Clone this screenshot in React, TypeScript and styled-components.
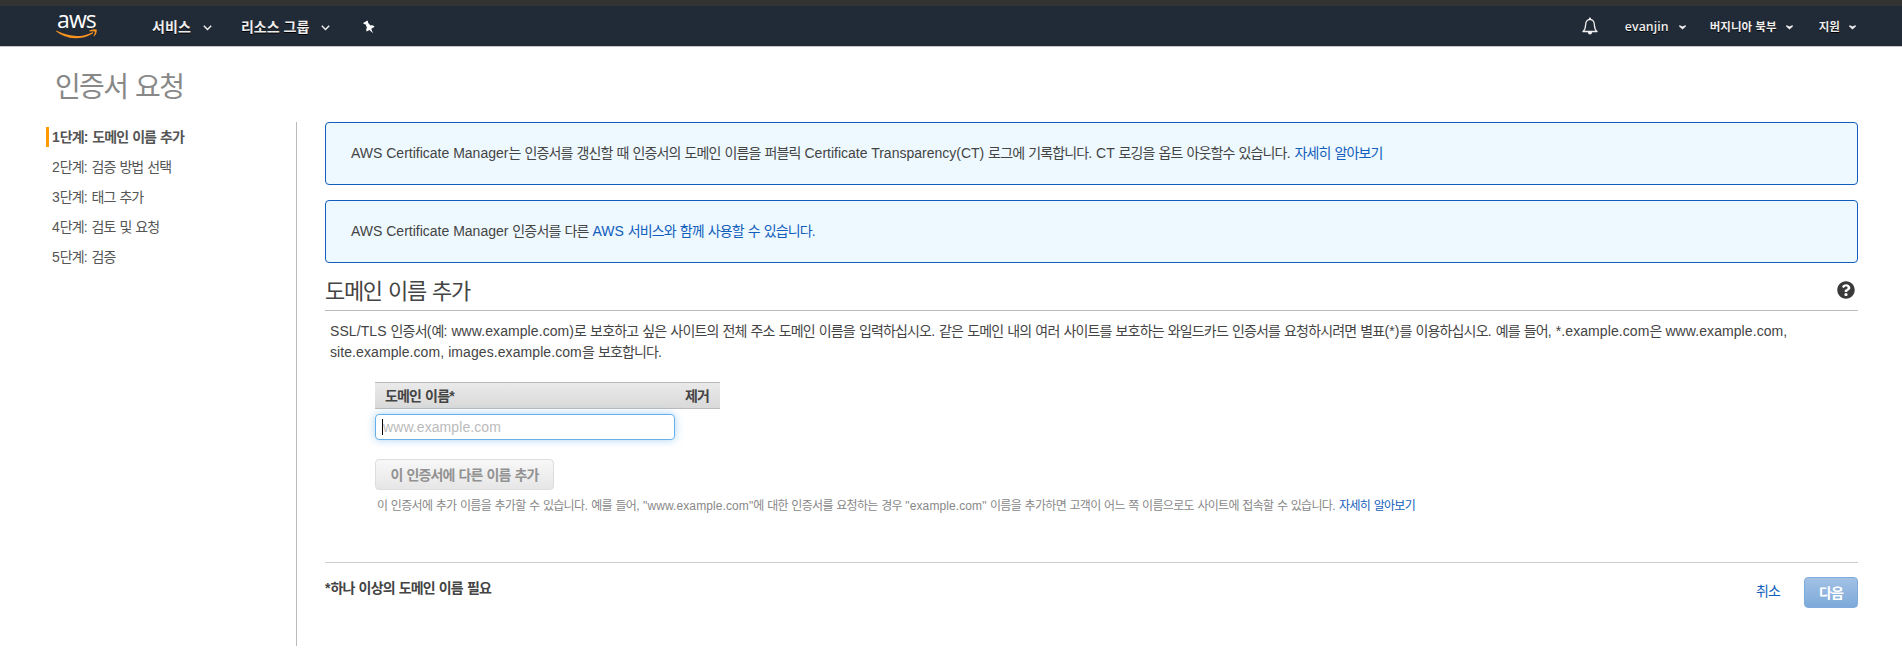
import React from "react";
import styled, { createGlobalStyle } from "styled-components";
import { FaQuestionCircle } from "react-icons/fa";

const GlobalStyle = createGlobalStyle`
  * { box-sizing: border-box; }
  body {
    margin: 0;
    background: #fff;
    color: #444;
    font-family: "Liberation Sans", "Noto Sans CJK KR", sans-serif;
    font-size: 14px;
    letter-spacing: 0.08px;
  }
`;

const Hangul = styled.span`
  letter-spacing: var(--hangul-spacing, -0.06em);
`;

/* Tightens the Korean runs of a mixed Korean and Latin text. */
const Mixed = ({ children }: { children: string }) => (
  <>
    {children.split(/([\uAC00-\uD7A3]+)/).map((run, i) =>
      i % 2 ? <Hangul key={i}>{run}</Hangul> : run
    )}
  </>
);

const Page = styled.div`
  width: 100%;
  height: 666px;
  overflow: hidden;
`;

const NavBar = styled.header`
  display: flex;
  align-items: center;
  height: 47px;
  padding: 0 46px 0 56px;
  border-top: 6px solid #333;
  border-bottom: 1px solid #c4c6c8;
  background: #212b37;
  color: #eee;
  font-family: "Open Sans", "Noto Sans CJK KR", sans-serif;
`;

const NavItem = styled.div<{ $size: number; $gap: number; $before: number; $weight?: number }>`
  display: flex;
  align-items: center;
  gap: ${(p) => p.$gap}px;
  margin-left: ${(p) => p.$before}px;
  padding-top: 2px;
  font-size: ${(p) => p.$size}px;
  font-weight: ${(p) => p.$weight ?? 700};
  line-height: 20px;
  white-space: nowrap;
  text-shadow: 0 1px 0 #000;
`;

const Spacer = styled.div`
  flex: 1;
`;

const PageTitle = styled.h1`
  margin: 0;
  padding: 21px 0 0 55px;
  height: 75px;
  color: #888;
  font-size: 28px;
  font-weight: 400;
  line-height: 40px;
`;

const Body = styled.div`
  display: flex;
  height: 524px;
`;

const Sidebar = styled.nav`
  flex: none;
  display: flex;
  flex-direction: column;
  gap: 10px;
  width: 297px;
  padding: 5px 0 0 46px;
  border-right: 1px solid #bbb;
`;

const Step = styled.div<{ $active?: boolean }>`
  height: 20px;
  padding-left: 3px;
  border-left: 3px solid ${(p) => (p.$active ? "#ff9900" : "transparent")};
  color: #555;
  font-weight: ${(p) => (p.$active ? 700 : 400)};
  line-height: 20px;
  letter-spacing: 0;
  --hangul-spacing: -0.065em;
`;

const Content = styled.main`
  flex: 1;
  margin: 0 44px 0 28px;
`;

const Notice = styled.div`
  height: 63px;
  margin-bottom: 15px;
  padding: 0 25px;
  border: 1px solid #125ebc;
  border-radius: 4px;
  background: #edf8ff;
  line-height: 60px;
  letter-spacing: 0;
`;

const Link = styled.a`
  color: #125ebc;
`;

const SectionHead = styled.div`
  display: flex;
  align-items: center;
  justify-content: space-between;
  height: 33px;
  padding: 0 3px 8px 0;
  border-bottom: 1px solid #bbb;
  margin-bottom: 10px;
  h2 {
    margin: 4px 0 0;
    font-size: 22px;
    font-weight: 400;
    line-height: 28px;
  }
`;

const Description = styled.p`
  margin: 0 60px 19px 5px;
  line-height: 21px;
`;

const Form = styled.div`
  margin-left: 50px;
`;

const TableHead = styled.div`
  display: flex;
  justify-content: space-between;
  width: 345px;
  height: 27px;
  padding: 0 11px 0 10px;
  border: solid #bbb;
  border-width: 1px 0;
  background: linear-gradient(#eaeaea, #d9d9d9);
  font-weight: 700;
  line-height: 26px;
`;

const Field = styled.div`
  display: flex;
  align-items: center;
  width: 300px;
  height: 26px;
  margin: 5px 0 19px;
  padding-left: 6px;
  border: 1px solid #66afe9;
  border-radius: 4px;
  box-shadow: 0 0 8px rgba(102, 175, 233, 0.55);
  color: #bbb;
`;

const Caret = styled.span`
  width: 1px;
  height: 16px;
  margin-top: -1px;
  background: #000;
`;

const Button = styled.button<{ $primary?: boolean }>`
  height: 31px;
  padding: 1px 0 0;
  width: ${(p) => (p.$primary ? 54 : 179)}px;
  border: 1px solid ${(p) => (p.$primary ? "#7facda" : "#ddd")};
  border-radius: 4px;
  background: ${(p) =>
    p.$primary ? "linear-gradient(#a3c1e5, #7daada)" : "linear-gradient(#f8f8f8, #e6e6e6)"};
  color: ${(p) => (p.$primary ? "#fff" : "#929292")};
  font: inherit;
  font-weight: 700;
  line-height: 28px;
`;

const Hint = styled.p`
  margin: 6px 0 0 2px;
  color: #888;
  font-size: 12px;
  line-height: 20px;
  letter-spacing: 0.1px;
  --hangul-spacing: -0.0555em;
`;

const Footer = styled.footer`
  display: flex;
  align-items: flex-start;
  margin-top: 46px;
  padding-top: 14px;
  border-top: 1px solid #ccc;
`;

const Required = styled.strong`
  flex: 1;
  line-height: 22px;
`;

const Cancel = styled(Link)`
  margin-right: 24px;
  line-height: 28px;
`;

const LogoMark = styled.div`
  display: flex;
  flex-direction: column;
  width: 42px;
  height: 40px;
  color: #fff;
  font-size: 23px;
  font-weight: 500;
  line-height: 24px;
  letter-spacing: -0.9px;
  padding: 1px 0 0 1px;
  svg {
    margin: -2px 0 0 -1px;
    flex: none;
  }
`;

const Logo = () => (
  <LogoMark>
    aws
    <svg width="42" height="10" viewBox="0 0 42 10">
      <path d="M0.3 1.6 Q20 11.5 36 3.4 Q38 2.9 36.8 4.4 Q28 9.5 19 9.3 Q8 8.8 0 2.2Z" fill="#f7931e" />
      <path d="M33 1.8 Q37 -0.6 40.6 0.6 Q41.5 3.9 38.2 7.3 Q37.3 7.6 37.7 6.6 Q39.4 3.2 38.6 2.5 Q37 1.9 33.8 2.5Z" fill="#f7931e" />
    </svg>
  </LogoMark>
);

const ChevronIcon = styled.svg`
  margin-top: 2px;
`;

const Chevron = () => (
  <ChevronIcon width="9" height="6" viewBox="0 0 9 6">
    <path d="M0.8 0.8 L4.5 4.5 L8.2 0.8" fill="none" stroke="#eee" strokeWidth="1.5" />
  </ChevronIcon>
);

const SmallArrow = () => (
  <svg width="7" height="5" viewBox="0 0 7 5">
    <path d="M0 0.6 H1.4 L3.5 1.6 L5.6 0.6 H7 V1.2 L3.5 4.6 L0 1.2Z" fill="#eee" />
  </svg>
);

const Pin = () => (
  <svg width="14" height="14" viewBox="0 0 14 14">
    <path d="M1.2 3 L5.4 0.6 L6.2 1.9 L5.8 2.6 L8.5 5.4 Q11 4.8 12.6 6.7 L9.2 8.8 L11 13.2 L7.5 9.9 L4.6 11.6 Q3.6 9.4 4.9 7.6 L3.3 4 L2 4.2Z" fill="#fff" />
  </svg>
);

const Bell = () => (
  <svg width="16" height="18" viewBox="0 0 16 18">
    <path d="M1 14.5 Q3.4 12.5 3.6 8 Q3.9 2.6 8 2.4 Q12.1 2.6 12.4 8 Q12.6 12.5 15 14.5Z" fill="none" stroke="#eee" strokeWidth="1.3" strokeLinejoin="round" />
    <circle cx="8" cy="1.7" r="1.1" fill="#eee" />
    <path d="M5.7 15 H10.3 Q9.8 17.5 8 17.5 Q6.2 17.5 5.7 15Z" fill="#eee" />
  </svg>
);

const steps = [
  "1단계: 도메인 이름 추가",
  "2단계: 검증 방법 선택",
  "3단계: 태그 추가",
  "4단계: 검토 및 요청",
  "5단계: 검증",
];

export default function App() {
  return (
    <Page>
      <GlobalStyle />
      <NavBar>
        <Logo />
        <NavItem $size={14} $gap={12} $before={54}>
          서비스
          <Chevron />
        </NavItem>
        <NavItem $size={14} $gap={12} $before={29}>
          리소스 그룹
          <Chevron />
        </NavItem>
        <NavItem $size={14} $gap={0} $before={32}>
          <Pin />
        </NavItem>
        <Spacer />
        <Bell />
        <NavItem $size={12.3} $gap={10} $before={27} $weight={600}>
          evanjin
          <SmallArrow />
        </NavItem>
        <NavItem $size={11.5} $gap={9} $before={24} $weight={600}>
          버지니아 북부
          <SmallArrow />
        </NavItem>
        <NavItem $size={11.5} $gap={9} $before={26} $weight={600}>
          지원
          <SmallArrow />
        </NavItem>
      </NavBar>
      <PageTitle>
        <Mixed>인증서 요청</Mixed>
      </PageTitle>
      <Body>
        <Sidebar>
          {steps.map((s, i) => (
            <Step key={s} $active={i === 0}>
              <Mixed>{s}</Mixed>
            </Step>
          ))}
        </Sidebar>
        <Content>
          <Notice>
            <Mixed>
              {"AWS Certificate Manager는 인증서를 갱신할 때 인증서의 도메인 이름을 퍼블릭 Certificate Transparency(CT) 로그에 기록합니다. CT 로깅을 옵트 아웃할수 있습니다. "}
            </Mixed>
            <Link>
              <Mixed>자세히 알아보기</Mixed>
            </Link>
          </Notice>
          <Notice>
            <Mixed>{"AWS Certificate Manager 인증서를 다른 "}</Mixed>
            <Link>
              <Mixed>AWS 서비스와 함께 사용할 수 있습니다.</Mixed>
            </Link>
          </Notice>
          <SectionHead>
            <h2>
              <Mixed>도메인 이름 추가</Mixed>
            </h2>
            <FaQuestionCircle size={18} color="#3a3a3a" />
          </SectionHead>
          <Description>
            <Mixed>
              {"SSL/TLS 인증서(예: www.example.com)로 보호하고 싶은 사이트의 전체 주소 도메인 이름을 입력하십시오. 같은 도메인 내의 여러 사이트를 보호하는 와일드카드 인증서를 요청하시려면 별표(*)를 이용하십시오. 예를 들어, *.example.com은 www.example.com,"}
            </Mixed>
            <br />
            <Mixed>site.example.com, images.example.com을 보호합니다.</Mixed>
          </Description>
          <Form>
            <TableHead>
              <span>
                <Mixed>도메인 이름*</Mixed>
              </span>
              <span>
                <Mixed>제거</Mixed>
              </span>
            </TableHead>
            <Field>
              <Caret />
              www.example.com
            </Field>
            <Button>
              <Mixed>이 인증서에 다른 이름 추가</Mixed>
            </Button>
            <Hint>
              <Mixed>
                {'이 인증서에 추가 이름을 추가할 수 있습니다. 예를 들어, "www.example.com"에 대한 인증서를 요청하는 경우 "example.com" 이름을 추가하면 고객이 어느 쪽 이름으로도 사이트에 접속할 수 있습니다. '}
              </Mixed>
              <Link>
                <Mixed>자세히 알아보기</Mixed>
              </Link>
            </Hint>
          </Form>
          <Footer>
            <Required>
              <Mixed>*하나 이상의 도메인 이름 필요</Mixed>
            </Required>
            <Cancel>
              <Mixed>취소</Mixed>
            </Cancel>
            <Button $primary>
              <Mixed>다음</Mixed>
            </Button>
          </Footer>
        </Content>
      </Body>
    </Page>
  );
}
